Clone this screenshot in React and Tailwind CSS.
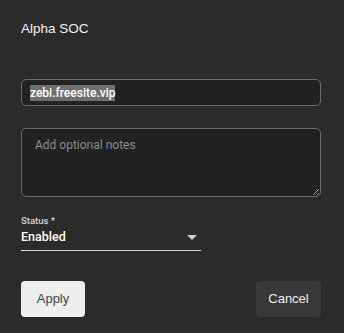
import React from 'react';

export default function App() {
  return (
    <div className="w-[344px] h-[333px] bg-[#2b2b2b] px-[21px] pt-[19px] font-['Roboto',sans-serif] text-white">
      <h1 className="text-[13.5px] leading-[20px] font-['Liberation_Sans',Arial,sans-serif] text-[#f2f2f2]">Alpha SOC</h1>

      <div className="mt-[40px] h-[27px] w-[300px] rounded-[5px] border border-[#6a6a6a] bg-[#222222] pl-[8px] flex items-center">
        <span className="bg-[#6f6f6f] text-[12px] leading-[16px] font-medium text-white">zebi.freesite.vip</span>
      </div>

      <textarea
        placeholder="Add optional notes"
        className="mt-[22px] block h-[69px] w-[300px] rounded-[5px] border border-[#6a6a6a] bg-[#222222] px-[13px] py-[8px] text-[12px] leading-[16px] text-white placeholder:text-[#8c8c8c] outline-none"
      />

      <div className="mt-[18px] w-[180px]">
        <div className="text-[9.5px] leading-[12px] font-medium text-[#d6d6d6]">Status *</div>
        <div className="flex items-center justify-between h-[20px] border-b border-[#d8d8d8] pb-[3px] box-content">
          <span className="text-[12.5px] leading-[16px] font-medium text-white">Enabled</span>
          <svg width="10" height="5" viewBox="0 0 10 5" className="mr-[4px]">
            <path d="M0 0 L10 0 L5 5 Z" fill="#cfcfcf" />
          </svg>
        </div>
      </div>

      <div className="mt-[30px] w-[300px] flex justify-between font-['Liberation_Sans',Arial,sans-serif]">
        <button className="h-[36px] w-[64px] rounded-[4px] bg-[#eeeeee] text-[13px] text-[#444444]">Apply</button>
        <button className="h-[36px] w-[65px] rounded-[4px] bg-[#383838] text-[13px] text-[#eeeeee]">Cancel</button>
      </div>
    </div>
  );
}
